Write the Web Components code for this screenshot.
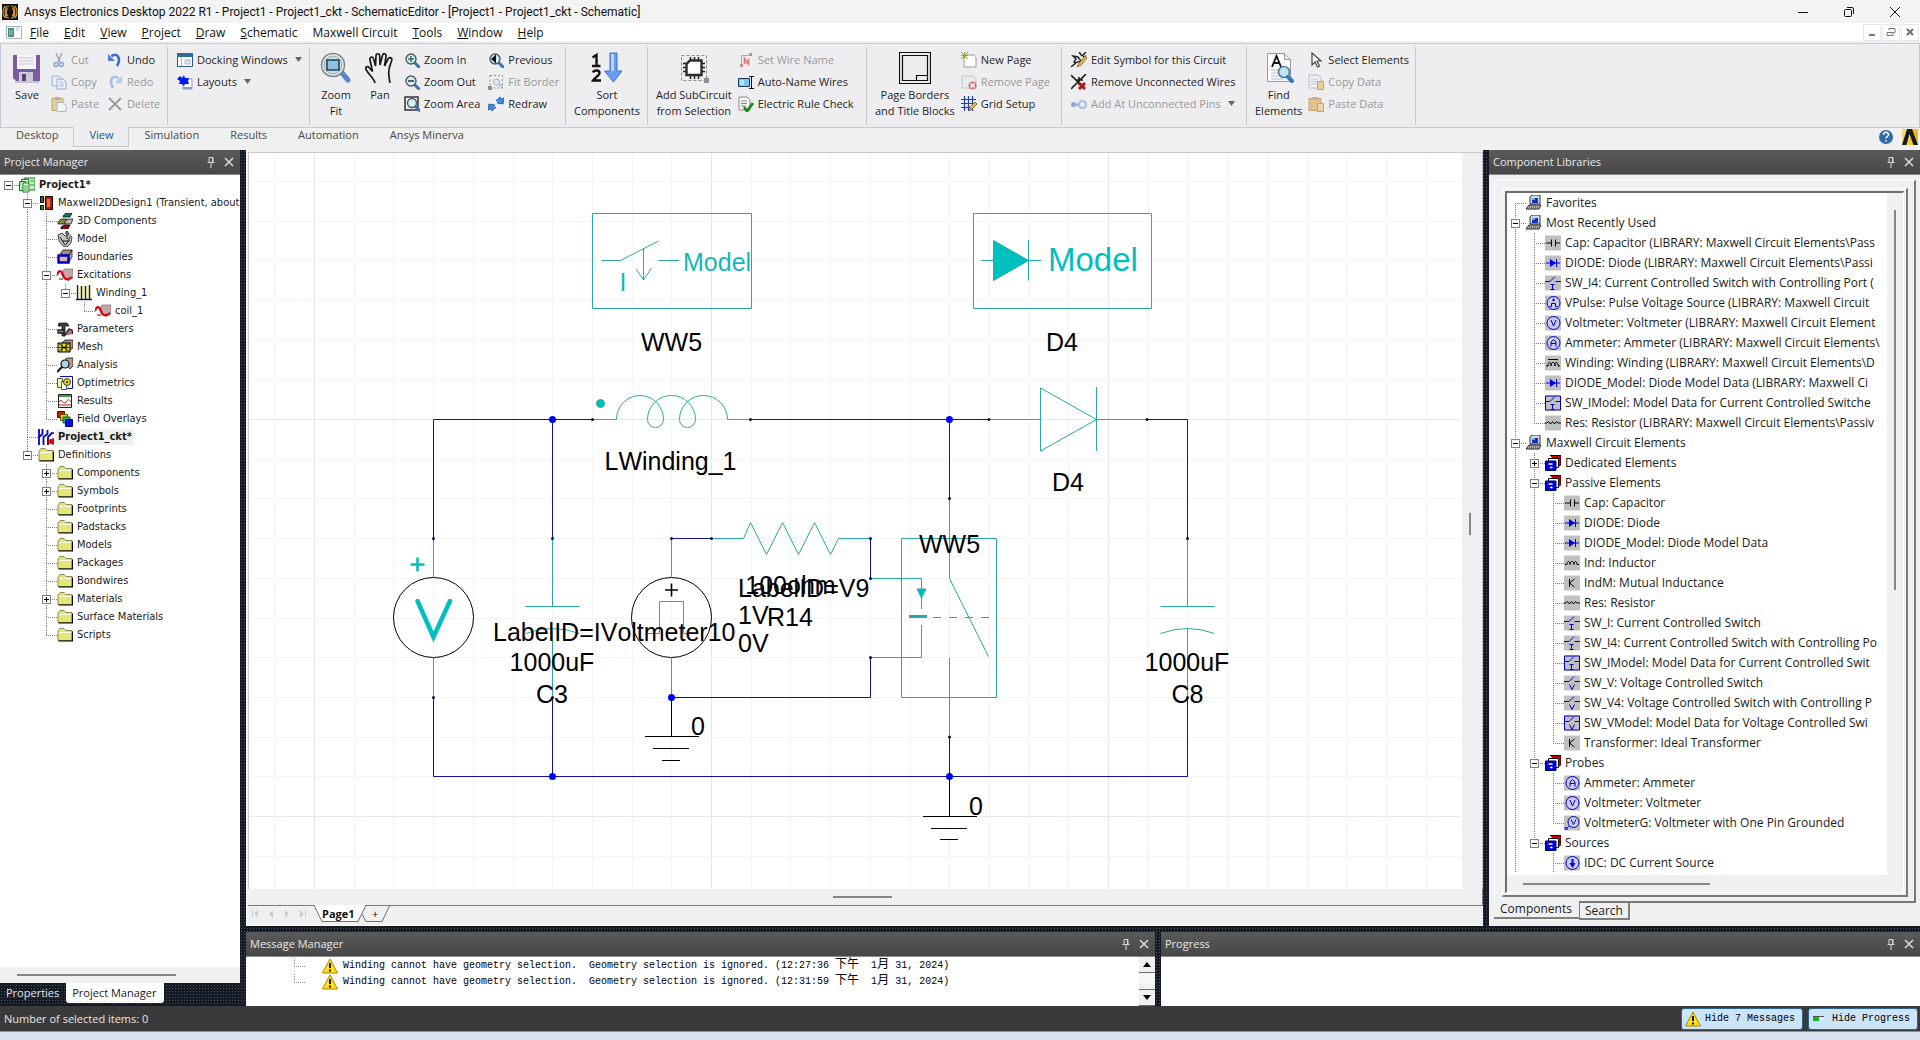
<!DOCTYPE html>
<html lang="en">
<head>
<meta charset="utf-8">
<title>Ansys Electronics Desktop 2022 R1</title>
<style>
  html, body { margin: 0; height: 100%; }
  body { font: 11px/16px "Open Sans", "Noto Sans", sans-serif; color: #1e1e1e; background: #d9e2ef; overflow: hidden; }
  ansys-desktop { height: 100%; }
</style>
</head>
<body>
<ansys-desktop></ansys-desktop>
<script>
/* ---------- icon set ---------- */
const lens = (x, y, r, inner) => `<path d="M${x + r - 1} ${y + r - 1}l4 4" stroke="#3c6fb4" stroke-width="3" stroke-linecap="round"/><circle cx="${x}" cy="${y}" r="${r}" fill="#d6ecf5" stroke="#4d5a63" stroke-width="1.4"/>${inner}`;
const grayBox = '<path d="M0 0.5h16v15H0z" fill="#c0c0c0"/>';
const blueRound = '<circle cx="8.5" cy="8" r="6.5" fill="#c9c9e8" stroke="#0000c8"/>';
const sheets = '<path d="M5 .5h11v9l-2 2" fill="#d40000" stroke="#000"/><path d="M3.5 3.5h10v9h-10z" fill="#fff" stroke="#000"/><path d="M.5 6h10.5v9.5H.5z" fill="#0000e0" stroke="#000060"/><path d="M3.5 9h4M5 12.5h2.500" stroke="#fff" stroke-width="1.5"/>';
const swi = t => `${grayBox}<path d="M0 6.5h5l5-5M10.5 6.5H16" stroke="#0000d0" fill="none"/>` + (t === 'I'
  ? '<path d="M5.5 9.5h4M7.5 9.5v5M5.5 14.5h4" stroke="#0000d0" fill="none"/>'
  : '<path d="M5.5 9.5l2.500 5 2.500-5" stroke="#0000d0" fill="none"/>');
const ICONS = {
  app: '<path d="M0 0h16v16H0z" fill="#111"/><path d="M7 2C2 2 2 14 7 14M6 4.5c-2.500 1-2.500 6 0 7M3.5 2C0 5 0 11 3.5 14M9 2c5 0 5 12 0 12M10 4.5c2.500 1 2.500 6 0 7M12.5 2c3.500 3 3.500 9 0 12" stroke="#d79a2b" fill="none" stroke-width="1.2"/>',
  doc: '<path d="M.5 2.5h15v12H.5z" fill="#fff" stroke="#a7b1ba"/><path d="M2 4h6v9H2z" fill="#4c8a8f"/><path d="M3 6h4v5H3z" fill="#76b28e"/><path d="M10 4h3M10 6h3" stroke="#b0b8d0"/>',
  cut: '<path d="M5 1l4 9M11 1L7 10" stroke="#9aa6b8" stroke-width="1.5"/><circle cx="5" cy="12.5" r="2" fill="none" stroke="#86a2d6" stroke-width="1.5"/><circle cx="10.5" cy="12.5" r="2" fill="none" stroke="#86a2d6" stroke-width="1.5"/>',
  copy: '<path d="M1 2h7l2 2v8H1z" fill="#e6edf9" stroke="#a0b4dc"/><path d="M6 5h6l3 3v7H6z" fill="#eef3fc" stroke="#90a8d8"/><path d="M8 8h4M8 10h5M8 12h5" stroke="#a9bbe0"/>',
  paste: '<path d="M1 2.5h11v12H1z" fill="#e3cf9c" stroke="#bda873"/><path d="M4 1h5v3H4z" fill="#a8adb8"/><path d="M6 6.5h6l3 3v6H6z" fill="#f2f4f8" stroke="#a8b4cc"/>',
  undo: '<path d="M4.5 4.5C9 0 15 5 10 14" stroke="#3f6fc4" stroke-width="2.6" fill="none"/><path d="M1 2v7h7z" fill="#4c80d6"/>',
  redo: '<path d="M11.5 4.5C7 0 1 5 6 14" stroke="#a9bedf" stroke-width="2.6" fill="none"/><path d="M15 2v7H8z" fill="#b4c8e8"/>',
  del: '<path d="M2 2l12 12M14 2L2 14" stroke="#9a9a9a" stroke-width="1.8" fill="none"/>',
  dock: '<path d="M.5 1.5h15v13H.5z" fill="#fff" stroke="#2c5a7c"/><path d="M0 1h16v4H0z" fill="#2d6c9c"/><path d="M4.5 5v9M8 8h5v4H8z" stroke="#9fb6c8" fill="#dfe9f1"/>',
  layouts: '<path d="M6 5h9v10H6z" fill="#fff" stroke="#8ea2b4"/><path d="M6 13h9v2H6z" fill="#7f9cc0"/><path d="M3 2l2 2 2-3 1 3 4 0-1 3 1 3H8l-1 2-2-2H2l1-3-3-2z" fill="#0018f0"/>',
  zoomin: lens(7, 7, 5, '<path d="M7 4v6M4 7h6" stroke="#2a7d4c" stroke-width="1.5"/>'),
  zoomout: lens(7, 7, 5, '<path d="M4 7h6" stroke="#1d3550" stroke-width="1.5"/>'),
  zoomarea: '<path d="M1 1h13v13H1z" fill="none" stroke="#333" stroke-width="1.5"/>' + lens(8, 7, 4.5, ''),
  prev: lens(7, 7, 5, '<path d="M8 2.5v9L3 7z" fill="#111"/>'),
  fit: '<path d="M2 1.5h12.500v12.500H2z" fill="none" stroke="#8f8f8f" stroke-dasharray="2 2"/><circle cx="8.5" cy="8" r="3" fill="#e2e9f2" stroke="#a6b1c4"/><path d="M11 10l3 3" stroke="#b1bed4" stroke-width="2"/><path d="M0 12h4v4H0z" fill="#8f8f8f"/>',
  redraw: '<path d="M8 5l4-4 1.500 2 2.500-1-1 6-6-1 2-1.500-1-1z" fill="#3f8ee4" stroke="#1d4fa0" stroke-width=".8"/><path d="M8 11l-4 4-1.500-2L0 14l1-6 6 1-2 1.500 1 1z" fill="#3f8ee4" stroke="#1d4fa0" stroke-width=".8"/>',
  wire: '<path d="M3.5 13V3.5h9" stroke="#b6a8a8" fill="none"/><path d="M2 12h3v3H2zM11 1h3v3h-3z" fill="#c98c8c"/><path d="M6.5 12V6.5l4 5.500V6.5" stroke="#e07878" stroke-width="1.6" fill="none"/>',
  auto: '<path d="M.5 4.5h11v8H.5z" fill="#74c7f2" stroke="#1b3a5c"/><path d="M11 2.500h5M11 14.500h5M13.5 2.500v12" stroke="#111" fill="none"/><path d="M2 6h4v5H2z" fill="#b4e2fa"/>',
  rule: '<path d="M1 1h8l3 3v10H1z" fill="#fafafa" stroke="#8a8a8a"/><path d="M3 5h6M3 7.5h6M3 10h5" stroke="#888"/><path d="M6 11l3 4 6-8" stroke="#178a17" stroke-width="2.8" fill="none"/>',
  newpage: '<path d="M3 3h10l2 2.500V15H3z" fill="#fff" stroke="#9a9a9a"/><path d="M0 0l7 7M7 0L0 7M3.5 0v7M0 3.5h7" stroke="#b89a12"/>',
  rmpage: '<path d="M1 2h11l3 2.500V14H1z" fill="#ececec" stroke="#c2c2c2"/><circle cx="11.5" cy="11.5" r="4" fill="#cc7d86"/><path d="M9.5 9.5l4 4M13.5 9.5l-4 4" stroke="#fff" stroke-width="1.4"/>',
  grid: '<path d="M3.5 0v15M7.5 0v15M11.5 0v15M0 3.5h15M0 7.5h15M0 11.5h13" stroke="#1f3fb0" stroke-width="1.2"/><path d="M8 15l1-4 5-5 2 2-5 5z" fill="#e8b85c" stroke="#7a5a1c" stroke-width=".8"/>',
  editsym: '<path d="M0 15l5-4M11 4l4-4M2 4l5 1 3 4-6 2-1-1 2-3zM8 0l3 4M12 5l3-1" stroke="#222" fill="none" stroke-width="1.4"/><path d="M6 15l2-4 6-7 2 2-6 7z" fill="#e8bb4d" stroke="#7a5a1c" stroke-width=".8"/>',
  rmwire: '<path d="M0 1l10 10M15 0L0 15M5 6h7M8 3v8" stroke="#222" fill="none" stroke-width="1.7"/><path d="M8 9l6 6M14 9l-6 6" stroke="#b3161c" stroke-width="3"/>',
  pins: '<circle cx="2.5" cy="8.5" r="2.5" fill="#8fa8da"/><path d="M4 8.5h5" stroke="#8fa8da" stroke-width="2"/><circle cx="11.5" cy="8.5" r="3.5" fill="none" stroke="#a9bce4" stroke-width="2"/>',
  select: '<path d="M4 1v12l3-3 2.500 5 2-1-2.500-5h4z" fill="#fff" stroke="#444" stroke-width="1.2"/>',
  copyd: '<path d="M1 1h9l3 3v10H1z" fill="#eef0f4" stroke="#b5bac4"/><path d="M3 5h7M3 7.5h7M3 10h6" stroke="#c2c8d4"/><path d="M9.5 7.5h6v8h-6z" fill="#efcf96" stroke="#c9a25e"/>',
  pasted: '<path d="M1 2.5h12v12H1z" fill="#e4c193" stroke="#c9a06a"/><path d="M4 1h6v3H4z" fill="#c9b492"/><path d="M9.5 7.5h6v8h-6z" fill="#efd6a0" stroke="#c9a25e"/>',
  save32: '<path d="M2 3h27v26H5l-3-3z" fill="#7a5c9c"/><path d="M6 3h19v14H6z" fill="#f5f4f8"/><path d="M8 6h15M8 9h15M8 12h15" stroke="#c9c4d4"/><path d="M8 20h14v9H8z" fill="#cfcad8"/><path d="M11 22h4v7h-4z" fill="#5b4378"/><path d="M4 29h24v2H4z" fill="#c3c3cc"/>',
  zoomfit32: '<path d="M22 21l6 7" stroke="#4f86d8" stroke-width="5" stroke-linecap="round"/><circle cx="13" cy="13" r="11.5" fill="#eef2f4" stroke="#7d8488" stroke-width="1.5"/><circle cx="13" cy="13" r="9" fill="#bfe0ee" stroke="#9aa4a8"/><path d="M7 8h12v10H7z" fill="#8fc1e6" stroke="#2e3f4c" stroke-width="1.6"/>',
  pan32: '<path d="M11 31C10 26 5 23 2 17.500c-1-3 2-4 3.500-1.500l3 3.500L6 8c-.5-3.500 3-4 3.700-1L11.500 14 12 4c0-3 3.500-3 3.700 0l.3 9L18.500 3.500c.6-2.700 4-2.200 3.500 1L20.500 14l3.500-7c1.500-2.500 4.500-1 3.700 1.500-1.500 4.500-3 7-3 12 0 3 .5 6 1.300 10.500" fill="none" stroke="#1b1b1b" stroke-width="1.7"/>',
  sort32: '<path d="M19 1h7v18h5L22.500 30l-9-11H19z" fill="#6a9df2" stroke="#3f72cf"/><path d="M20 2h3v17h-3z" fill="#bcd5fb"/><path d="M1.500 5.500L5.500 3v11M1 14h8.500" stroke="#111" stroke-width="2.4" fill="none"/><path d="M2 20.500c1-2.700 6.500-2.700 6.500 .5 0 2.500-5 5-6.500 7.500h8" stroke="#111" stroke-width="2.4" fill="none"/>',
  sub32: '<path d="M3.5 3.5h25v25h-25z" fill="none" stroke="#8c8c8c" stroke-dasharray="3 2"/><path d="M5 11.500h22M5 15.500h22M5 19.500h22M12.500 5v22M16.500 5v22M20.500 5v22" stroke="#222" stroke-width="1.5"/><path d="M12 8.5h11.500v14.500h-15v-11z" fill="#fff" stroke="#2c2c2c" stroke-width="2.4"/><path d="M26 26h5v5h-5z" fill="#8f8f8f"/>',
  page32: '<path d="M.5 .5h31v31H.5zM3.5 3.5h25v25h-25zM17.500 28v-4.500h11" fill="none" stroke="#111" stroke-width="1.2"/>',
  find32: '<path d="M4.500 1.500h17l6 6v22h-23z" fill="#fdfdfd" stroke="#9a9a9a"/><path d="M21.500 1.500v6h6" fill="#e8e8e8" stroke="#9a9a9a"/><path d="M8 18h10M8 21h8M8 24h10M8 27h12" stroke="#b9b9c8"/><path d="M9 15L13.500 4 18 15M11 11h6" stroke="#111" stroke-width="1.8" fill="none"/><circle cx="21" cy="20" r="5.5" fill="#bfe3f4" stroke="#4e7f9c" stroke-width="1.7"/><path d="M25 25l4 4" stroke="#2e78c8" stroke-width="4" stroke-linecap="round"/>',
  help: '<circle cx="8" cy="8" r="7" fill="#2f6cab"/><path d="M5.5 6c0-3.500 5-3.500 5-.5 0 2-2.500 2-2.500 4M8 11v1.600" stroke="#fff" stroke-width="1.5" fill="none"/>',
  ansys: '<path d="M0 0h16v16H0z" fill="#f6d77a"/><path d="M9 0h7v16H9z" fill="#f3b61c"/><path d="M5 0h5l6 16h-4.500L7.500 5 4.500 16H0z" fill="#1a1a1a"/><path d="M8 8l3 8H6z" fill="#ffc81e"/>',
  /* project tree */
  project: '<path d="M5 1h11v12H5z" fill="#c8f0c8" stroke="#108010"/><path d="M2.5 2.5h7v10h-7z" fill="#e8fce8" stroke="#108010"/><path d="M.5 4.5h6v9h-6z" fill="#b0f0b0" stroke="#108010"/><path d="M4 6h6v9H4z" fill="#fff" stroke="#108010"/><path d="M5 9h4M5 11h4M5 13h4M11 4h4M11 8h4" stroke="#20a020"/>',
  design: '<path d="M2.5 1.5h3v6h-3z" fill="#2060a0" stroke="#000"/><path d="M2.5 10.500h3v4h-3z" fill="#00b000" stroke="#000"/><path d="M6 3h3v3H6z" fill="#e8d800"/><path d="M7.5 1.5h7v13h-7z" fill="#b02010" stroke="#000"/><path d="M9 4h3v8H9z" fill="#e87040"/>',
  comp3d: '<path d="M6 3l3-3h6l-2 4H6z" fill="#107878" stroke="#000" stroke-width=".7"/><path d="M1 9l3-3h6l-2 5H1z" fill="#8a8a30" stroke="#000" stroke-width=".7"/><path d="M8 8l3-2h5l-2 5H8z" fill="#b8b8b8" stroke="#000" stroke-width=".7"/><path d="M4 14l3-2h6l-2 4H4z" fill="#901010" stroke="#000" stroke-width=".7"/>',
  model: '<path d="M1 4l4-2 3 3 3-2 4 3-1 6-4 4-4-1-4-5z" fill="#c4c4c4" stroke="#222" stroke-width=".8"/><path d="M10 0v8M8 3l2-3 2 3M3 6l5 8M13 6l-4 8M5 10h8" stroke="#111" stroke-width=".9" fill="none"/>',
  bound: '<path d="M3 5l3-4h9l-3 5z" fill="#b08888" stroke="#000" stroke-width=".7"/><path d="M12 6l3-5v7l-3 5z" fill="#c4b0b0" stroke="#000" stroke-width=".7"/><path d="M1.500 6.500h10v7h-10z" fill="#d8b0b0" stroke="#0000c0" stroke-width="2.4"/>',
  excite: '<path d="M4 7l3-5h9v9l-5 3z" fill="#c4a8a8" stroke="#666" stroke-width=".6"/><path d="M0 8c2-6 5-4 6 0s4 6 9 2" stroke="#d40010" stroke-width="2.2" fill="none"/><path d="M2 12h4" stroke="#600"/>',
  winding: '<path d="M1 1h14v13H1z" fill="#f2efb0"/><path d="M1.500 0v15M5.500 1v13M9.500 1v13M13.500 0v15M0 14.500h16" stroke="#10107a" stroke-width="1.3"/>',
  params: '<path d="M2 2h8l2 3H8v10H5V5H1z" fill="#404048" stroke="#000" stroke-width=".7"/><path d="M7 15l5-7 3 1 1 4M1 9h6v3H1z" fill="#a07878" stroke="#222" stroke-width="1.3"/>',
  mesh: '<path d="M5 4l3-3h8v8l-3 2z" fill="#a88" stroke="#000" stroke-width=".7"/><path d="M1 4h12v9H1z" fill="#e8e020" stroke="#000"/><path d="M5 4v9M9 4v9M1 8.500h12M1 4l12 9M13 4L1 13" stroke="#000" stroke-width=".8"/>',
  analysis: '<path d="M7 4l3-3h6v8l-3 3z" fill="#c89090" stroke="#000" stroke-width=".7"/><circle cx="8" cy="7" r="4" fill="#a8d8e8" stroke="#111" stroke-width="1.2"/><path d="M5 10l-5 5" stroke="#111" stroke-width="2.2"/>',
  opti: '<path d="M3 1.500h12.500v12H6" fill="#fff" stroke="#1010a0"/><path d="M.5 3.500h5v9h-5z" fill="#f0f0a0" stroke="#555"/><path d="M4.500 6.500h5v8h-5z" fill="#fff" stroke="#555"/><circle cx="10" cy="7" r="3.5" fill="#e8d820" stroke="#333"/><circle cx="10" cy="7" r="1" fill="#111"/>',
  results: '<path d="M1.500 1.500h13v13h-13z" fill="#fff" stroke="#222"/><path d="M2 2h12v2H2z" fill="#40a040"/><path d="M2 9c3-5 4 4 7 0s3-2 5 0M2 12h12" stroke="#c01818" fill="none"/>',
  overlays: '<path d="M.5 .5h7v6h-7z" fill="#c02000" stroke="#501000"/><path d="M3.500 3.500h7v6h-7z" fill="#e8d800" stroke="#605800"/><path d="M6 6h7v6H6z" fill="#20b070" stroke="#065"/><path d="M8.500 8.500h7v7h-7z" fill="#0010e8" stroke="#000060"/>',
  ckt: '<path d="M1 0v16M1 8l3.500-3V0M5.500 16V8l4-3V1M10 16V8l4-4" stroke="#0000c8" stroke-width="1.8" fill="none"/><path d="M10 11l6-2v7l-6-2z" fill="#d01010"/><path d="M13 4h3" stroke="#0000c8" stroke-width="1.5"/>',
  folder: '<path d="M1 4.500l2-3h4l2 2h6v10H1z" fill="#e6e678" stroke="#8a8a50"/><path d="M2 5.500h12" stroke="#fffff0"/><path d="M1.500 14h14V4.500" fill="none" stroke="#000" stroke-width="1.2"/>',
  /* library tree */
  pc: '<path d="M4 2l2-2h8v9H4z" fill="#d8d8d8" stroke="#333"/><path d="M6 3h6v5H6z" fill="#1030c0"/><path d="M6 3h3v2H6z" fill="#60b0f0"/><path d="M0 14l3-4h12l-2 4z" fill="#b8b8b8" stroke="#222"/><path d="M3 12h9" stroke="#222" stroke-dasharray="1 1"/>',
  cap: grayBox + '<path d="M1 8h5.500M6.500 4.500v7M10.500 4.500v7M10.500 8H15" stroke="#000" fill="none"/>',
  diode: grayBox + '<path d="M1 8h14M11.500 4v8" stroke="#0000e8" fill="none"/><path d="M5 4l6 4-6 4z" fill="#0000e8"/>',
  swi: swi('I'), swv: swi('V'),
  swim: swi('I') + '<path d="M.5 1h15v14H.5z" fill="none" stroke="#0000d0"/>',
  swvm: swi('V') + '<path d="M.5 1h15v14H.5z" fill="none" stroke="#0000d0"/>',
  vpulse: grayBox + blueRound + '<path d="M4.500 11.500h2v-3h4v3h2M7 5h3M8.500 3.500v3" stroke="#0000c8" fill="none"/>',
  volt: grayBox + blueRound + '<path d="M6 5l2.500 6L11 5" stroke="#0000c8" fill="none"/>',
  amp: grayBox + blueRound + '<path d="M6 11.500V7l2.500-2.500L11 7v4.500M6 8.500h5" stroke="#0000c8" fill="none"/>',
  voltg: grayBox + '<circle cx="9.5" cy="7" r="5.5" fill="#c9c9e8" stroke="#0000c8"/><path d="M7 4.500l2.500 5 2.500-5M5 11l-4 4M0 13h3v2" stroke="#0000c8" fill="none"/>',
  wind: grayBox + '<path d="M3 4.500h10M1 11h2c0-5 3-5 3 0 0-5 4-5 4 0 0-5 3-5 3 0h2" stroke="#000" fill="none"/>',
  ind: grayBox + '<path d="M1 9.500h2c0-4 3-4 3 0 0-4 4-4 4 0 0-4 3-4 3 0h2" stroke="#000" fill="none"/>',
  res: grayBox + '<path d="M0 8h2l1.500-1.500L5.500 9l2-2.500 2 2.500 2-2.500L13 8h3" stroke="#000" fill="none"/>',
  mut: grayBox + '<path d="M5.500 4v8M10.500 4l-5 4 5 4" stroke="#000" fill="none"/>',
  idc: grayBox + blueRound + '<path d="M8.5 4v5" stroke="#0000e8" stroke-width="2"/><path d="M5.500 8h6l-3 5z" fill="#0000e8"/>',
  sheets,
  warn: '<path d="M8 1l7.500 14H.5z" fill="#ffe11a" stroke="#a88400"/><path d="M8 5v5M8 11.500v2" stroke="#000" stroke-width="1.8"/>',
  prog: '<path d="M1 5.500h11" stroke="#555"/><path d="M1 6h6v4H1z" fill="#18b428"/><path d="M7 6h5v3H7z" fill="#e2ecf2"/>'
};

class UiIcon extends HTMLElement {
  connectedCallback() {
    const n = this.getAttribute('name'), s = n.endsWith('32') ? 32 : 16;
    this.attachShadow({ mode: 'open' }).innerHTML = `<style>:host{display:block;flex:none;width:${s}px;height:${s}px;white-space:normal}svg{display:block}</style><svg width="${s}" height="${s}" viewBox="0 0 ${s} ${s}" aria-hidden="true">${ICONS[n] || ''}</svg>`;
  }
}
customElements.define('ui-icon', UiIcon);

const define = (name, html) => customElements.define(name, class extends HTMLElement {
  connectedCallback() {
    if (this.shadowRoot) return;
    const t = document.createElement('template');
    t.innerHTML = typeof html === 'function' ? html(this) : html;
    this.attachShadow({ mode: 'open' }).append(t.content.cloneNode(true));
  }
});
const RESET = 'button{font:inherit;color:inherit;background:none;border:0;margin:0;padding:0;white-space:nowrap}';

/* ---------- title and menu ---------- */
define('title-bar', `<style>${RESET}
  :host{display:flex;align-items:center;height:23px;padding:0 2px;background:#f3f3f3;color:#111;font:12px/16px Roboto,"Open Sans",sans-serif}
  ui-icon{margin-right:6px}
  span{flex:1}
  button{width:46px;height:20px;display:grid;place-items:center}
  svg{fill:none;stroke:#111}
</style><ui-icon name="app"></ui-icon><span><slot></slot></span>
<button aria-label="Minimize"><svg width="12" height="12"><path d="M1 6.500h10"/></svg></button>
<button aria-label="Restore"><svg width="12" height="12"><rect x="1.5" y="3.5" width="7" height="7" rx="1"/><path d="M4 1.500h5q1.500 0 1.500 1.500v5"/></svg></button>
<button aria-label="Close"><svg width="12" height="12"><path d="M1 1l10 10M11 1L1 11"/></svg></button>`);

define('menu-bar', () => {
  const items = ['_File', '_Edit', '_View', '_Project', '_Draw', '_Schematic', 'Maxwell Circuit', '_Tools', '_Window', '_Help'];
  return `<style>${RESET}
  :host{display:flex;align-items:center;height:18px;background:#fff;padding:0 1px 0 6px;font-size:12px;color:#111}
  nav{display:flex;gap:15px;flex:1;margin:1px 0 0 8px}
  .mdi{display:flex;gap:1px}
  .mdi button{width:18px;height:17px;border:1px solid #e8e8ec;display:grid;place-items:center}
  .mdi svg{fill:none;stroke:#6c7684}
</style><ui-icon name="doc"></ui-icon><nav>${items.map(t => `<button>${t.replace(/_(.)/, '<u>$1</u>')}</button>`).join('')}</nav>
<div class="mdi"><button aria-label="Minimize sheet"><svg width="10" height="10"><path d="M2 8h6" stroke-width="2"/></svg></button>
<button aria-label="Restore sheet"><svg width="10" height="10"><path d="M1 5.500h6v3H1zM3 3V1.500h6v4H7.500"/></svg></button>
<button aria-label="Close sheet"><svg width="10" height="10"><path d="M2 2l6 6M8 2L2 8" stroke-width="2.2"/></svg></button></div>`;
});

/* ---------- ribbon ---------- */
define('ribbon-button', el => {
  const big = el.hasAttribute('big'), off = el.hasAttribute('off');
  return `<style>${RESET}
  :host{display:block}
  button{display:flex;align-items:center;color:${off ? '#989898' : '#1e1e1e'}}
  .small{height:22px;gap:4px}
  .big{flex-direction:column;min-width:44px;padding:3px 4px 0;gap:3px}
  .label{line-height:16px;text-align:center;white-space:pre}
  svg{display:block;margin-left:3px}
</style><button class="${big ? 'big' : 'small'}" ${off ? 'disabled' : ''}><ui-icon name="${el.getAttribute('icon')}"></ui-icon><span class="label"><slot></slot></span>${el.hasAttribute('drop') ? '<svg width="7" height="5"><path d="M0 0h7L3.500 5z" fill="#666"/></svg>' : ''}</button>`;
});
define('ribbon-column', `<style>:host{display:flex;flex-direction:column;align-items:flex-start;padding:0 6px 0 2px}:host(:first-child){padding-left:5px}</style><slot></slot>`);
define('ribbon-group', el => `<style>:host{display:flex;box-sizing:border-box;align-items:flex-start;width:${el.getAttribute('size')}px;flex:none;height:78px;padding:2px 0 0 4px;border-right:1px solid #c6c6d4}</style><slot></slot>`);
define('ribbon-bar', () => {
  const b = (icon, text, flags = '') => `<ribbon-button icon="${icon}" ${flags}>${text}</ribbon-button>`;
  const col = (...x) => `<ribbon-column>${x.join('')}</ribbon-column>`;
  const grp = (size, ...x) => `<ribbon-group size="${size}">${x.join('')}</ribbon-group>`;
  return `<style>${RESET}
  :host{display:block;background:#f0f0f0;padding-top:2px}
  .panel{display:flex;height:83px;align-items:center;background:#eeeef1;border:1px solid #c6c6d4}
  .tabs{display:flex;height:22px;padding:0 2px 0 0;color:#4a4a4a}
  .tabs nav{display:flex;flex:1;align-items:flex-start}
  .tabs nav button{padding:0 14px 5px 15px;height:19px;line-height:13px;border:1px solid transparent;border-top:0}
  .tabs nav button[aria-selected=true]{background:#eeeef1;border-color:#c6c6d4;color:#1d5486;margin-top:-1px;height:20px;padding-top:1px}
  .tabs ui-icon{margin:1px 0 0 8px}
</style><div class="panel">
${grp(167, b('save32', 'Save', 'big'), col(b('cut', 'Cut', 'off'), b('copy', 'Copy', 'off'), b('paste', 'Paste', 'off')), col(b('undo', 'Undo'), b('redo', 'Redo', 'off'), b('del', 'Delete', 'off')))}
${grp(142, col(b('dock', 'Docking Windows', 'drop'), b('layouts', 'Layouts', 'drop')))}
${grp(256, b('zoomfit32', 'Zoom\nFit', 'big'), b('pan32', 'Pan', 'big'), col(b('zoomin', 'Zoom In'), b('zoomout', 'Zoom Out'), b('zoomarea', 'Zoom Area')), col(b('prev', 'Previous'), b('fit', 'Fit Border', 'off'), b('redraw', 'Redraw')))}
${grp(82, b('sort32', 'Sort\nComponents', 'big'))}
${grp(219, b('sub32', 'Add SubCircuit\nfrom Selection', 'big'), col(b('wire', 'Set Wire Name', 'off'), b('auto', 'Auto-Name Wires'), b('rule', 'Electric Rule Check')))}
${grp(195, b('page32', 'Page Borders\nand Title Blocks', 'big'), col(b('newpage', 'New Page'), b('rmpage', 'Remove Page', 'off'), b('grid', 'Grid Setup')))}
${grp(185, col(b('editsym', 'Edit Symbol for this Circuit'), b('rmwire', 'Remove Unconnected Wires'), b('pins', 'Add At Unconnected Pins', 'off drop')))}
${grp(169, b('find32', 'Find\nElements', 'big'), col(b('select', 'Select Elements'), b('copyd', 'Copy Data', 'off'), b('pasted', 'Paste Data', 'off')))}
</div><div class="tabs"><nav role="tablist">${['Desktop', 'View', 'Simulation', 'Results', 'Automation', 'Ansys Minerva'].map(t => `<button role="tab" aria-selected="${t === 'View'}">${t}</button>`).join('')}</nav>
<ui-icon name="help"></ui-icon><ui-icon name="ansys"></ui-icon></div>`;
});

/* ---------- docked panel ---------- */
define('dock-panel', el => `<style>${RESET}
  :host{display:flex;flex-direction:column;min-width:0;min-height:0;background:#fff}
  header{display:flex;align-items:center;gap:2px;height:24px;flex:none;padding:0 3px 0 4px;color:#e8e8e8;background:linear-gradient(#5a5a5a,#474747);border-bottom:1px solid #8a8a8a}
  h2{flex:1;margin:0;font:inherit}
  header button{width:16px;height:16px}
  svg{display:block;margin:2px;fill:none;stroke:#d2d8e4}
  slot{display:flex;flex:1;min-height:0;flex-direction:column}
</style><header><h2>${el.getAttribute('heading')}</h2>
<button aria-label="Pin"><svg width="12" height="12"><path d="M4 1.500h4v5H4zM2.500 6.500h7M6 6.500V12M7.500 1.500v5"/></svg></button>
<button aria-label="Close"><svg width="12" height="12"><path d="M2 2l8 8M10 2l-8 8" stroke-width="1.6"/></svg></button></header><slot></slot>`);

/* ---------- tree ---------- */
const TREES = {
  project: { row: 18, gap: 4, items: [
    [0, 'project', 'Project1*', '-', 'b'], [1, 'design', 'Maxwell2DDesign1 (Transient, about Z)', '-'],
    [2, 'comp3d', '3D Components'], [2, 'model', 'Model'], [2, 'bound', 'Boundaries'], [2, 'excite', 'Excitations', '-'],
    [3, 'winding', 'Winding_1', '-'], [4, 'excite', 'coil_1'], [2, 'params', 'Parameters'], [2, 'mesh', 'Mesh'],
    [2, 'analysis', 'Analysis'], [2, 'opti', 'Optimetrics'], [2, 'results', 'Results'], [2, 'overlays', 'Field Overlays'],
    [1, 'ckt', 'Project1_ckt*', '', 'b sel'], [1, 'folder', 'Definitions', '-'],
    [2, 'folder', 'Components', '+'], [2, 'folder', 'Symbols', '+'], [2, 'folder', 'Footprints'], [2, 'folder', 'Padstacks'],
    [2, 'folder', 'Models'], [2, 'folder', 'Packages'], [2, 'folder', 'Bondwires'], [2, 'folder', 'Materials', '+'],
    [2, 'folder', 'Surface Materials'], [2, 'folder', 'Scripts']] },
  library: { row: 20, gap: 4, open: [0, 2], items: [
    [0, 'pc', 'Favorites'], [0, 'pc', 'Most Recently Used', '-'],
    [1, 'cap', 'Cap: Capacitor (LIBRARY: Maxwell Circuit Elements\\Pass'], [1, 'diode', 'DIODE: Diode (LIBRARY: Maxwell Circuit Elements\\Passi'],
    [1, 'swi', 'SW_I4: Current Controlled Switch with Controlling Port ('], [1, 'vpulse', 'VPulse: Pulse Voltage Source (LIBRARY: Maxwell Circuit'],
    [1, 'volt', 'Voltmeter: Voltmeter (LIBRARY: Maxwell Circuit Element'], [1, 'amp', 'Ammeter: Ammeter (LIBRARY: Maxwell Circuit Elements\\'],
    [1, 'wind', 'Winding: Winding (LIBRARY: Maxwell Circuit Elements\\D'], [1, 'diode', 'DIODE_Model: Diode Model Data (LIBRARY: Maxwell Ci'],
    [1, 'swim', 'SW_IModel: Model Data for Current Controlled Switche'], [1, 'res', 'Res: Resistor (LIBRARY: Maxwell Circuit Elements\\Passiv'],
    [0, 'pc', 'Maxwell Circuit Elements', '-'], [1, 'sheets', 'Dedicated Elements', '+'], [1, 'sheets', 'Passive Elements', '-'],
    [2, 'cap', 'Cap: Capacitor'], [2, 'diode', 'DIODE: Diode'], [2, 'diode', 'DIODE_Model: Diode Model Data'], [2, 'ind', 'Ind: Inductor'],
    [2, 'mut', 'IndM: Mutual Inductance'], [2, 'res', 'Res: Resistor'], [2, 'swi', 'SW_I: Current Controlled Switch'],
    [2, 'swi', 'SW_I4: Current Controlled Switch with Controlling Po'], [2, 'swim', 'SW_IModel: Model Data for Current Controlled Swit'],
    [2, 'swv', 'SW_V: Voltage Controlled Switch'], [2, 'swv', 'SW_V4: Voltage Controlled Switch with Controlling P'],
    [2, 'swvm', 'SW_VModel: Model Data for Voltage Controlled Swi'], [2, 'mut', 'Transformer: Ideal Transformer'],
    [1, 'sheets', 'Probes', '-'], [2, 'amp', 'Ammeter: Ammeter'], [2, 'volt', 'Voltmeter: Voltmeter'], [2, 'voltg', 'VoltmeterG: Voltmeter with One Pin Grounded'],
    [1, 'sheets', 'Sources', '-'], [2, 'idc', 'IDC: DC Current Source']] }
};
define('tree-view', el => {
  const { row, gap, items, open = [] } = TREES[el.getAttribute('source')], m = row / 2;
  const continues = (i, d) => { for (let j = i + 1; j < items.length; j++) { if (items[j][0] < d) return false; if (items[j][0] === d) return true; } return open.includes(d); };
  const line = d => `<path d="${d}" stroke="#808080" stroke-dasharray="1 1"/>`;
  const rows = items.map(([depth, icon, label, tog, cls], i) => {
    let cells = '';
    for (let d = 0; d <= depth; d++) {
      let p = '';
      if (d < depth) p = continues(i, d) ? line(`M8.500 0v${row}`) : '';
      else p = (i ? line(`M8.500 0v${m}`) : '') + line(`M8 ${m}.5h11`) + (continues(i, d) ? line(`M8.500 ${m}v${m}`) : '');
      const btn = d === depth && tog ? `<button aria-label="${tog === '-' ? 'Collapse' : 'Expand'}"><svg width="9" height="9"><rect x=".5" y=".5" width="8" height="8" fill="#fff" stroke="#808080"/><path d="M2 4.500h5${tog === '+' ? 'M4.500 2v5' : ''}" stroke="#000"/></svg></button>` : '';
      cells += `<i><svg width="19" height="${row}">${p}</svg>${btn}</i>`;
    }
    return `<li class="${cls || ''}" role="treeitem">${cells}<ui-icon name="${icon}"></ui-icon><span>${label}</span></li>`;
  }).join('');
  return `<style>${RESET}
  :host{display:block;overflow:hidden;min-width:0;background:#fff;color:#1a1a1a}
  ul{list-style:none;margin:0;padding:0}
  li{display:flex;align-items:center;height:${row}px;white-space:nowrap}
  i{display:grid;flex:none;align-items:center}
  i>*{grid-area:1/1}
  i button{width:9px;height:9px;margin-left:4px}
  svg{display:block}
  span{padding:0 2px;margin-left:${gap - 2}px}
  .b span{font-weight:bold}
  .sel span{background:#f0f0f0}
</style><ul role="tree">${rows}</ul>`;
});

/* ---------- schematic drawing ---------- */
define('schematic-canvas', () => {
  let grid = '';
  for (let k = -1; k < 30; k++) { const x = Math.round(314 + 39.7 * k) + .5; grid += `<path d="M${x} 150V900" stroke="${k % 10 ? '#f4f4fb' : '#e4e4f4'}"/>`; }
  for (let k = -6; k < 13; k++) { const y = Math.round(419 + 39.7 * k) + .5; grid += `<path d="M240 ${y}H1480" stroke="${k % 10 ? '#f4f4fb' : '#e8e8f6'}"/>`; }
  const pin = (x, y) => `<circle cx="${x}" cy="${y}" r="1.5" fill="#001050"/>`;
  const dot = (x, y) => `<circle cx="${x}" cy="${y}" r="3.5" fill="#0000f0"/>`;
  const t = (x, y, s, a = 'middle') => `<text x="${x}" y="${y}" text-anchor="${a}">${s}</text>`;
  const cap = x => `<path d="M${x} 538.5V606.5M${x - 27} 606.5h54M${x - 27} 633.5q27 -10 54 0M${x} 628.5V697.5"/>`;
  return `<style>:host{display:block;background:#fff;overflow:hidden;min-width:0;min-height:0}svg{display:block;width:100%;height:100%}
  text{font:25px "Liberation Sans",Arial,sans-serif;font-kerning:none;fill:#000}
  .teal{stroke:#2aa9a9;fill:none}.blue{stroke:#10109a;fill:none}.black{stroke:#000;fill:none}
  .tt text{fill:#12b8b8}.tt .large{font-size:33px;fill:#00bfbf}</style>
<svg role="img" aria-label="Circuit schematic"><g transform="translate(-249 -153)">
${grid}
<g class="black"><circle cx="433.5" cy="617.5" r="40"/><circle cx="671.5" cy="617.5" r="40"/>
<path d="M671.5 697.5V736.5M645 736.5h54M653 748.5h36M662 760.5h18M949.5 776.5v40M923 816.5h54M931 828.5h36M940 839.5h18"/>
<path d="M665 590h13M671.5 583.5v13" stroke-width="1.6"/></g>
<g class="teal">
<path d="M592.5 213.5h159v95h-159zM973.5 213.5h178v95h-178z"/>
<path d="M601.5 260.5h19L658.5 241M658.5 260.5H679M643.5 248v32M636 269l7.500 11 8-12"/>
<path d="M981 260.5h60M1028.500 240v40.500"/><path d="M993.5 240.500l35 20-35 20z" fill="#00bfbf"/>
<path d="M592.5 419.5h24A23.500 24 0 0 1 663.5 419.5 A8 8 0 0 1 647.5 419.5 A24 24 0 0 1 695.5 419.5 A8 8 0 0 1 679.5 419.5 A24 24 0 0 1 727.5 419.5H750.5"/>
<circle cx="600.5" cy="403.5" r="4" fill="#00bfbf"/>
<path d="M433.5 538.5v39M433.5 657.5v40M671.5 538.5v39M671.5 657.5v40"/>
${cap(552.5)}${cap(1187.5)}
<path d="M648 633.5h11.500V601.5h24v32H695"/>
<path d="M711.5 538.5h32l7-16 16 32 16-32 16 32 16-32 16 32 8-16h32"/>
<path d="M870.5 578.5h51V609M921.5 625v32.500h-51M901.5 538.5h95v159h-95z"/>
<path d="M917 589h9l-4.500 9z" fill="#00bfbf"/><path d="M909 616.5h18" stroke-width="3"/>
<path d="M933 617.5h56" stroke-dasharray="8 8"/>
<path d="M949.5 498.5v80l39 78M949.5 658v79"/>
<path d="M989 419.5h51.500M1096.500 387v64M1096.500 419.5H1147M1040.500 388v63l56-31.500z"/></g>
<g fill="none" stroke="#00bfbf"><path d="M417.5 601l16 36 16.500-36" stroke-width="4.5" stroke-linecap="round"/><path d="M410.5 564.500h14M417.5 557.500v14" stroke-width="2.5"/></g>
<g class="blue"><path d="M433.5 538.5V419.5H592.5M750.5 419.5H989M1147 419.5h40.500v119M433.5 697.5v79h754v-79M552.5 419.5v119M552.5 697.5v79M949.5 419.5v79M949.5 737v39.500M671.5 538.5h40M870.5 538.5v40M870.5 657.5v40h-199"/></g>
${[[592.5, 419.5], [750.5, 419.5], [989, 419.5], [1147, 419.5], [433.5, 538.5], [552.5, 538.5], [433.5, 697.5], [552.5, 697.5], [671.5, 538.5], [711.5, 538.5], [870.5, 538.5], [870.5, 578.5], [870.5, 657.5], [949.5, 498.5], [949.5, 737], [1187.5, 538.5], [1187.5, 697.5]].map(p => pin(...p)).join('')}
${[[552.5, 419.5], [949.5, 419.5], [552.5, 776.5], [949.5, 776.5], [671.5, 697.5]].map(p => dot(...p)).join('')}
<g class="tt">${t(623, 291, 'I')}${t(683, 271, 'Model', 'start')}<text class="large" x="1048" y="271">Model</text></g>
${t(671.5, 351, 'WW5')}${t(1062, 351, 'D4')}${t(670.5, 470, 'LWinding_1')}${t(1068, 491, 'D4')}${t(949.5, 553, 'WW5')}
${t(738, 597, 'LabelID=V9', 'start')}${t(790.5, 594, '100ohm')}${t(738, 624, '1V', 'start')}${t(790, 626, 'R14')}${t(738, 652, '0V', 'start')}
${t(493, 641, 'LabelID=IVoltmeter10', 'start')}${t(552, 671, '1000uF')}${t(552, 703, 'C3')}${t(698, 735, '0')}${t(976, 815, '0')}
${t(1187, 671, '1000uF')}${t(1187.5, 703, 'C8')}
</g></svg>`;
});

define('sheet-editor', `<style>${RESET}
  :host{display:flex;flex-direction:column;min-width:0;min-height:0;background:#f0f0f0;border-left:1px solid #fff;padding:2px 0 0 1px}
  .view{display:flex;flex:1;min-height:0;border:1px solid #c8c8c8;border-width:1px 1px 0 1px}
  .view schematic-canvas{flex:1}
  .v{width:20px;display:flex;flex-direction:column;justify-content:center;align-items:center}
  .v::after{content:"";width:2px;height:22px;background:#868686;margin:6px 4px 0 0}
  .h{height:16px;flex:none;display:flex;justify-content:center;align-items:center;border-bottom:1px solid #7a7a7a;border-right:1px solid #7a7a7a;padding-right:6px}
  .h::after{content:"";height:2px;width:59px;background:#868686}
  .tabs{height:19px;flex:none;display:flex;border-bottom:1px solid #fff}
  .tabs svg{display:block;fill:#c8ccd4}
  .nav{display:flex;gap:4px;padding:2px 3px 0 1px}
  .nav button{width:12px;height:12px}
  .sheet{display:grid;margin:-1px 0 0 0}
  .sheet>*{grid-area:1/1}
  .sheet svg{fill:none;stroke:#6e6e6e}
  .lab{display:flex;align-items:center;padding-left:10px;height:17px;color:#111}
  .lab b{width:50px}
</style>
<div class="view"><schematic-canvas></schematic-canvas><div class="v"></div></div><div class="h"></div>
<div class="tabs"><div class="nav"><button aria-label="First"><svg width="12" height="12"><path d="M3 2h1v8H3zM9 2v8L5 6z"/></svg></button><button aria-label="Previous"><svg width="12" height="12"><path d="M8 2v8L4 6z"/></svg></button><button aria-label="Next"><svg width="12" height="12"><path d="M4 2v8l4-4z"/></svg></button><button aria-label="Last"><svg width="12" height="12"><path d="M8 2h1v8H8zM3 2v8l4-4z"/></svg></button></div>
<div class="sheet"><svg width="82" height="18"><path d="M2 0l8 16.500h36L54 0z" fill="#fff" stroke="none"/><path d="M2 0l8 16.500h36L54 0M50 9l4 7.500h16L78 0"/></svg><div class="lab"><b><button style="font-weight:bold">Page1</button></b><button aria-label="New sheet">+</button></div></div></div>`);

define('library-pane', `<style>${RESET}
  :host{display:flex;flex-direction:column;flex:1;min-height:0;background:#f0f0f0;padding:5px 4px 0 5px;font-size:12px}
  .outer{flex:1;min-height:0;display:flex;border:1px solid #fff;border-right:2px solid #787878;border-bottom:2px solid #787878;padding:7px 6px 4px 7px}
  .inner{flex:1;min-width:0;display:flex;border:1px solid #fff;border-right:2px solid #787878;border-bottom:2px solid #787878;padding:2px}
  .well{flex:1;min-width:0;display:grid;grid-template:minmax(0,1fr) 17px/minmax(0,1fr) 16px;border:2px solid #6e6e6e;border-right:1px solid #fff;border-bottom:1px solid #fff}
  .v::after{content:"";display:block;width:2px;height:380px;margin:17px 0 0 7px;background:#868686}
  .h::after{content:"";display:block;height:2px;width:187px;margin:8px 0 0 16px;background:#868686}
  .tabs{display:flex;align-items:flex-start;height:23px}
  .tabs .on{background:#f0f0f0;border-bottom:2px solid #808080;padding:0 7px 0 6px;height:18px;line-height:16px;margin-top:-2px}
  .tabs .off{height:17px;line-height:13px;padding:0 5px 1px;border:2px solid #808080;border-width:0 2px 2px 1px}
</style><div class="outer"><div class="inner"><div class="well"><tree-view source="library"></tree-view><div class="v"></div><div class="h"></div></div></div></div>
<div class="tabs"><button class="on">Components</button><button class="off">Search</button></div>`);

define('project-pane', `<style>${RESET}
  :host{display:flex;flex-direction:column;flex:1;min-height:0;font-family:"DejaVu Sans Condensed","DejaVu Sans",sans-serif}
  tree-view{flex:1;padding-top:1px}
  .h{height:16px;flex:none;background:#f0f0f0;display:flex;align-items:center;padding-left:17px;box-sizing:border-box}
  .h::after{content:"";height:2px;width:159px;background:#868686}
</style><tree-view source="project"></tree-view><div class="h"></div>`);

define('message-list', () => {
  const msg = time => `<li><svg width="12" height="16"><path d="M.5 0v8M0 8.500h12" stroke="#909090" stroke-dasharray="1 1"/></svg><ui-icon name="warn"></ui-icon><span>Winding cannot have geometry selection.  Geometry selection is ignored. (${time} <b>下午</b>  1<b>月</b> 31, 2024)</span></li>`;
  return `<style>${RESET}
  :host{display:flex;flex:1;min-height:0;font:10px/16px "Liberation Mono","Noto Sans CJK SC",monospace;color:#000}
  ul{flex:1;min-width:0;margin:0;padding:1px 0 0 48px;list-style:none}
  li{display:flex;height:16px;white-space:pre}
  svg{display:block;fill:none}
  ui-icon{margin:0 5px 0 16px}
  b{font-size:12px;font-weight:normal;line-height:12px}
  .bar{width:16px;display:flex;flex-direction:column;justify-content:space-between;background:#f6f6f6}
  .bar button,.bar i{display:grid;place-items:center;height:16px;background:#f0f0f0;border-bottom:1px solid #6e6e6e}
  .bar i{height:5px;margin-top:auto}
</style><ul>${msg('12:27:36')}${msg('12:31:59')}</ul><div class="bar"><button aria-label="Scroll up"><svg width="8" height="5"><path d="M0 5h8L4 0z" fill="#000"/></svg></button><i></i><button aria-label="Scroll down"><svg width="8" height="5"><path d="M0 0h8L4 5z" fill="#000"/></svg></button></div>`;
});

define('status-bar', `<style>${RESET}
  :host{display:flex;align-items:center;gap:5px;height:26px;padding:0 2px 0 4px;background:#3a3a3a;color:#e6e6e6;border-bottom:1px solid #8b93a0;box-sizing:border-box}
  span{flex:1}
  button{display:flex;align-items:center;gap:4px;height:22px;padding:0 7px 0 3px;background:#cce4f7;border:1px solid #2a6496;border-radius:3px;color:#000;font:10px "Liberation Mono",monospace}
</style><span>Number of selected items: 0</span><button><ui-icon name="warn"></ui-icon>Hide 7 Messages</button><button><ui-icon name="prog"></ui-icon>Hide Progress</button>`);

/* ---------- application frame ---------- */
define('ansys-desktop', `<style>${RESET}
  :host{display:flex;flex-direction:column;padding-bottom:8px;box-sizing:border-box}
  title-bar,menu-bar,ribbon-bar,status-bar{flex:none}
  main{flex:1;min-height:0;display:grid;grid-template-columns:240px minmax(0,1fr);gap:6px;background:radial-gradient(circle,#47505c 35%,transparent 40%) 0 0/3px 3px #151b25}
  .left{display:flex;flex-direction:column;min-height:0}
  .left dock-panel{flex:1}
  .left nav{display:flex;height:23px;align-items:flex-start;color:#e4e4e4}
  .left nav button{height:20px;padding:0 7px 0 6px}
  .left nav button[aria-selected=true]{background:#fff;color:#1a1a1a;border-radius:0 0 3px 3px}
  .work{display:grid;grid-template-rows:minmax(0,1fr) 74px;gap:6px;min-width:0;min-height:0}
  .top{display:grid;grid-template-columns:minmax(0,1fr) 431px;gap:6px;min-height:0}
  .bottom{display:grid;grid-template-columns:minmax(0,909fr) minmax(0,759fr);gap:6px}
</style>
<title-bar>Ansys Electronics Desktop 2022 R1 - Project1 - Project1_ckt - SchematicEditor - [Project1 - Project1_ckt - Schematic]</title-bar>
<menu-bar></menu-bar><ribbon-bar></ribbon-bar>
<main><div class="left"><dock-panel heading="Project Manager"><project-pane></project-pane></dock-panel>
<nav role="tablist"><button role="tab" aria-selected="false">Properties</button><button role="tab" aria-selected="true">Project Manager</button></nav></div>
<div class="work"><div class="top"><sheet-editor></sheet-editor><dock-panel heading="Component Libraries"><library-pane></library-pane></dock-panel></div>
<div class="bottom"><dock-panel heading="Message Manager"><message-list></message-list></dock-panel><dock-panel heading="Progress"></dock-panel></div></div></main>
<status-bar></status-bar>`);
</script>
</body>
</html>
